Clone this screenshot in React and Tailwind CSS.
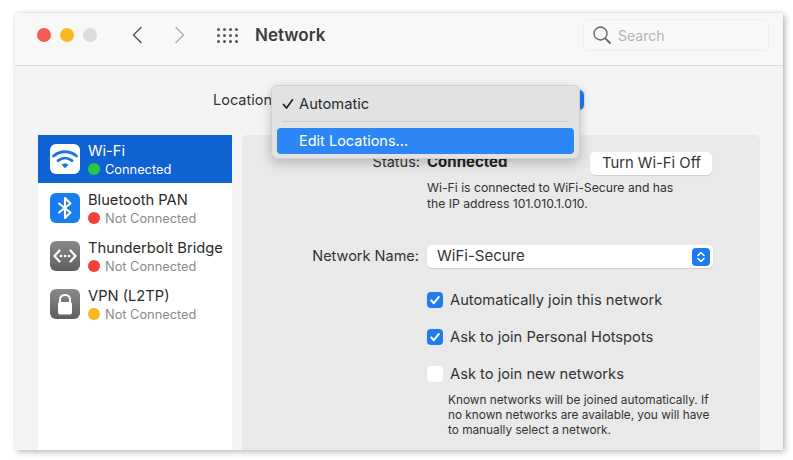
import React from "react";

const Dot = ({ c }) => <span className={`block w-3 h-3 rounded-full ${c}`} />;

const WifiIcon = () => (
  <svg width="30" height="30" viewBox="0 0 30 30">
    <rect width="30" height="30" rx="6" fill="#fff" />
    <g fill="none" stroke="#1f74d8" strokeLinecap="round">
      <path d="M3.500 12C10.200 6.300 19.800 6.300 26.500 12" strokeWidth="2.800" />
      <path d="M8 16.700C12.200 13.200 17.800 13.200 22 16.700" strokeWidth="2.800" />
    </g>
    <path d="M11.500 20.700C13.500 19 16.500 19 18.500 20.700L15 24.200Z" fill="#1f74d8" />
  </svg>
);
const BtIcon = () => (
  <svg width="30" height="30" viewBox="0 0 30 30">
    <rect width="30" height="30" rx="6" fill="#1b7cf0" />
    <path d="M9 10.500L20.500 19.500L15 25V5L20.500 10.500L9 19.500" fill="none" stroke="#fff" strokeWidth="2.100" strokeLinejoin="round" strokeLinecap="round" />
  </svg>
);
const TbIcon = () => (
  <svg width="30" height="30" viewBox="0 0 30 30">
    <defs><linearGradient id="g1" x1="0" y1="0" x2="0" y2="1"><stop offset="0" stopColor="#8a8a8a" /><stop offset="1" stopColor="#5e5e5e" /></linearGradient></defs>
    <rect width="30" height="30" rx="6" fill="url(#g1)" />
    <path d="M9.500 9.500L4.500 15L9.500 20.500M20.500 9.500L25.500 15L20.500 20.500" fill="none" stroke="#fff" strokeWidth="2.200" strokeLinecap="round" strokeLinejoin="round" />
    <circle cx="11" cy="15" r="1.300" fill="#fff" /><circle cx="15" cy="15" r="1.300" fill="#fff" /><circle cx="19" cy="15" r="1.300" fill="#fff" />
  </svg>
);
const VpnIcon = () => (
  <svg width="30" height="30" viewBox="0 0 30 30">
    <defs><linearGradient id="g2" x1="0" y1="0" x2="0" y2="1"><stop offset="0" stopColor="#8a8a8a" /><stop offset="1" stopColor="#5e5e5e" /></linearGradient></defs>
    <rect width="30" height="30" rx="6" fill="url(#g2)" />
    <path d="M10 14V10.500C10 4.500 20 4.500 20 10.500V14" fill="none" stroke="#fff" strokeWidth="2" />
    <rect x="8" y="13" width="14" height="12.500" rx="2" fill="#fff" />
  </svg>
);

const Row = ({ icon, name, status, dot, active }) => (
  <div className={`flex items-center h-12 pl-3 gap-2 ${active ? "bg-[#0f62d2]" : "pt-[2px]"}`}>
    {icon}
    <div className="flex flex-col">
      <span className={`text-[14.700px] leading-[18px] ${active ? "text-white" : "text-[#2b2b2b]"}`}>{name}</span>
      <span className={`mt-[2px] flex items-center gap-[5px] text-[12.800px] leading-[15px] ${active ? "text-white" : "text-[#8a8a8a]"}`}>
        <Dot c={dot} />{status}
      </span>
    </div>
  </div>
);

const Check = ({ on, label }) => (
  <div className="flex items-center gap-[7px] h-[18px]">
    <span className={`w-4 h-4 rounded-[4px] flex items-center justify-center ${on ? "bg-[#1f7cf0]" : "bg-white"}`}>
      {on && (
        <svg width="12" height="12" viewBox="0 0 12 12"><path d="M2.200 6.400L4.800 9.200L9.800 3" fill="none" stroke="#fff" strokeWidth="2" strokeLinecap="round" strokeLinejoin="round" /></svg>
      )}
    </span>
    <span className="text-[14.700px] text-[#333]">{label}</span>
  </div>
);

export default function App() {
  return (
    <div className="w-[793px] h-[460px] bg-white overflow-hidden pt-[13px] pl-[15px] font-['Inter','Liberation_Sans',sans-serif] antialiased">
      <div className="relative w-[768px] h-[437px] bg-[#f4f4f4] shadow-[2px_2px_6px_rgba(0,0,0,0.28),0_-1px_2px_rgba(0,0,0,0.06)] overflow-hidden">
        <div className="h-[53px] bg-[#f8f8f8] border-b border-[#dcdcdc] flex items-center pl-[22px] pr-[14px] pb-[8px]">
          <div className="flex gap-[9px]">
            <Dot c="w-[14px]! h-[14px]! bg-[#f55a53]" />
            <Dot c="w-[14px]! h-[14px]! bg-[#fbb81c]" />
            <Dot c="w-[14px]! h-[14px]! bg-[#dcdcdc]" />
          </div>
          <svg className="ml-[34px]" width="12" height="18" viewBox="0 0 12 18"><path d="M10 1.500L2.500 9L10 16.500" fill="none" stroke="#555" strokeWidth="1.500" strokeLinecap="round" strokeLinejoin="round" /></svg>
          <svg className="ml-[31px]" width="12" height="18" viewBox="0 0 12 18"><path d="M2 1.500L9.500 9L2 16.500" fill="none" stroke="#b0b0b0" strokeWidth="1.500" strokeLinecap="round" strokeLinejoin="round" /></svg>
          <div className="ml-[31px] grid grid-cols-4 gap-x-[3px] gap-y-[3px]">
            {Array.from({ length: 12 }).map((_, i) => (
              <span key={i} className="w-[3px] h-[3px] rounded-full bg-[#555]" />
            ))}
          </div>
          <span className="ml-[17px] pt-[2px] text-[17px] font-semibold text-[#3c3c3c]">Network</span>
          <div className="ml-auto w-[186px] h-[32px] rounded-[6px] bg-[#f8f8f8] border border-[#efefef] flex items-center pl-[8px] gap-[6px]">
            <svg width="20" height="20" viewBox="0 0 20 20"><circle cx="8.500" cy="8.500" r="6.500" fill="none" stroke="#666" strokeWidth="1.400" /><path d="M13.300 13.300L18 18" stroke="#666" strokeWidth="1.800" strokeLinecap="round" /></svg>
            <span className="text-[14px] text-[#b4b4b4]">Search</span>
          </div>
        </div>

        <div className="h-[69px] flex items-start pt-[24px] pl-[198px]">
          <span className="text-[14.500px] leading-[20px] text-[#333]">Location</span>
          <div className="ml-[6px] w-[306px] h-[20px] rounded-[5px] bg-[#1f7cf0] shadow-[0_0_0_1px_#cfe0f5]" />
        </div>

        <div className="flex gap-[10px] pl-[23px] h-[315px]">
          <div className="w-[194px] bg-white">
            <Row active icon={<WifiIcon />} name="Wi-Fi" status="Connected" dot="bg-[#28c940]" />
            <Row icon={<BtIcon />} name="Bluetooth PAN" status="Not Connected" dot="bg-[#f5403a]" />
            <Row icon={<TbIcon />} name="Thunderbolt Bridge" status="Not Connected" dot="bg-[#f5403a]" />
            <Row icon={<VpnIcon />} name="VPN (L2TP)" status="Not Connected" dot="bg-[#fbb81c]" />
          </div>
          <div className="w-[518px] bg-[#e9e9e9] rounded-t-[5px] pt-[17px] pl-[185px]">
            <div className="flex items-center h-[23px] relative">
              <span className="absolute -top-px right-[calc(100%+7px)] text-[14.500px] text-[#333] whitespace-nowrap">Status:</span>
              <span className="pb-[3px] text-[15px] font-bold text-[#222]">Connected</span>
              <span className="ml-[83px] w-[122px] h-[23px] rounded-[5px] bg-white shadow-[0_1px_1px_rgba(0,0,0,0.12)] text-[14.800px] text-[#333] flex items-center justify-center">Turn Wi-Fi Off</span>
            </div>
            <p className="mt-[5px] text-[12.200px] leading-[16px] text-[#333] w-[262px]">
              Wi-Fi is connected to WiFi-Secure and has the IP address 101.010.1.010.
            </p>
            <div className="mt-[33px] flex items-center h-[23px] relative">
              <span className="absolute top-0 right-[calc(100%+8px)] text-[14.500px] text-[#333] whitespace-nowrap">Network Name:</span>
              <div className="w-[286px] h-[23px] rounded-[5px] bg-white shadow-[0_1px_1px_rgba(0,0,0,0.12)] flex items-center pl-[10px] pr-[3px] justify-between">
                <span className="text-[15px] text-[#333]">WiFi-Secure</span>
                <span className="w-[18px] h-[18px] rounded-[4px] bg-[#1f7cf0] flex items-center justify-center">
                  <svg width="10" height="14" viewBox="0 0 10 14"><path d="M2 5.500L5 2.500L8 5.500M2 8.500L5 11.500L8 8.500" fill="none" stroke="#fff" strokeWidth="1.600" strokeLinecap="round" strokeLinejoin="round" /></svg>
                </span>
              </div>
            </div>
            <div className="mt-[23px] flex flex-col gap-[19px]">
              <Check on label="Automatically join this network" />
              <Check on label="Ask to join Personal Hotspots" />
              <Check label="Ask to join new networks" />
            </div>
            <p className="mt-[10px] ml-[21px] text-[11.800px] leading-[15px] text-[#333] w-[265px]">
              Known networks will be joined automatically. If no known networks are available, you will have to manually select a network.
            </p>
          </div>
        </div>

        <div className="absolute left-[256px] top-[72px] w-[309px] h-[74px] rounded-[6px] bg-[#e2e2e2] border border-[#cfcfcf] shadow-[0_4px_12px_rgba(0,0,0,0.22)] px-[5px] pt-[8px]">
          <div className="flex items-center h-[20px] pl-[5px] gap-[5px] text-[14.700px] text-[#2b2b2b]">
            <svg width="12" height="12" viewBox="0 0 12 12"><path d="M1.500 6.500L4.500 10L10.500 1.800" fill="none" stroke="#222" strokeWidth="1.700" strokeLinecap="round" strokeLinejoin="round" /></svg>
            Automatic
          </div>
          <div className="mt-[7px] mx-[5px] h-px bg-[#cbcbcb]" />
          <div className="mt-[6px] h-[26px] rounded-[4px] bg-[#2d86f5] text-white text-[14.500px] flex items-center pl-[22px]">Edit Locations...</div>
        </div>
      </div>
    </div>
  );
}
